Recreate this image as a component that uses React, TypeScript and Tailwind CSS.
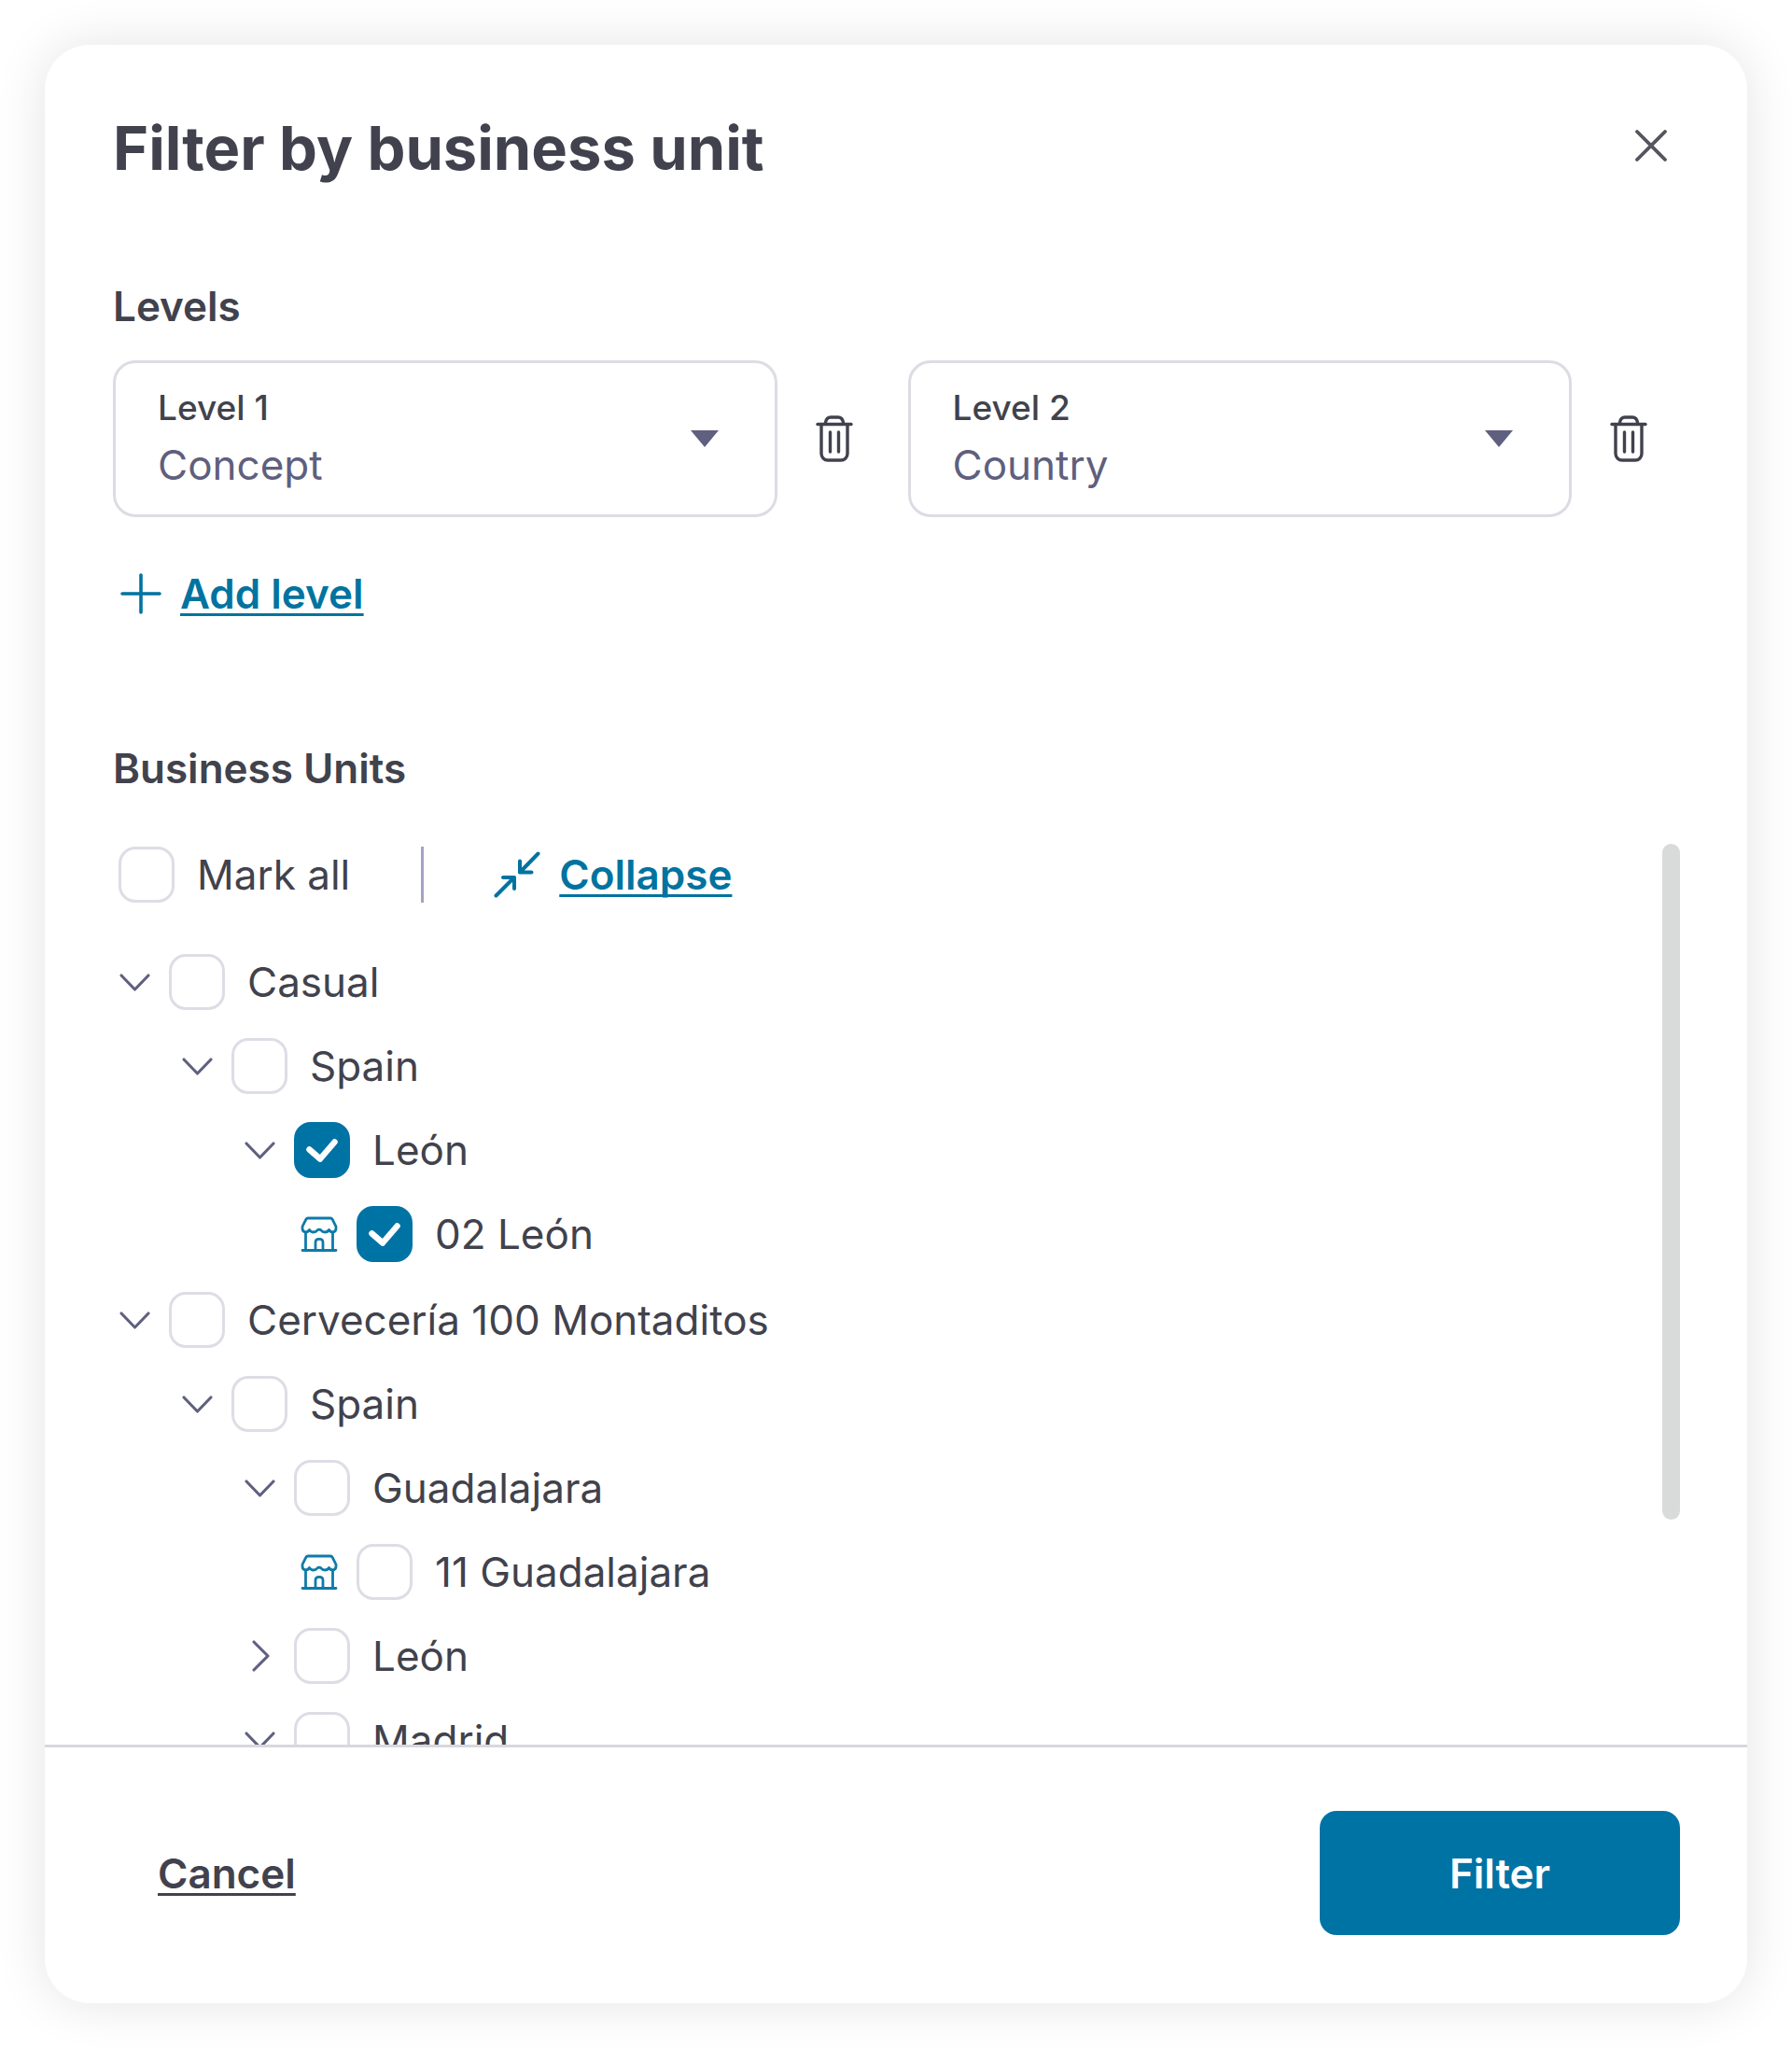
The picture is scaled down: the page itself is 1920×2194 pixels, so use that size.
import React, { useState } from 'react';
import { clsx } from 'clsx';

interface UnitNode {
    id: string;
    label: string;
    checked?: boolean;
    collapsed?: boolean;
    children?: UnitNode[];
}

const levels = [
    { id: 'level-1', label: 'Level 1', value: 'Concept' },
    { id: 'level-2', label: 'Level 2', value: 'Country' },
];

const levelOptions = ['Concept', 'Country', 'Province'];

const units: UnitNode[] = [
    {
        id: 'casual',
        label: 'Casual',
        children: [
            {
                id: 'casual-spain',
                label: 'Spain',
                children: [
                    {
                        id: 'casual-leon',
                        label: 'León',
                        checked: true,
                        children: [{ id: 'casual-leon-02', label: '02 León', checked: true }],
                    },
                ],
            },
        ],
    },
    {
        id: 'montaditos',
        label: 'Cervecería 100 Montaditos',
        children: [
            {
                id: 'montaditos-spain',
                label: 'Spain',
                children: [
                    {
                        id: 'montaditos-guadalajara',
                        label: 'Guadalajara',
                        children: [{ id: 'montaditos-guadalajara-11', label: '11 Guadalajara' }],
                    },
                    { id: 'montaditos-leon', label: 'León', collapsed: true, children: [] },
                    { id: 'montaditos-madrid', label: 'Madrid', children: [] },
                ],
            },
        ],
    },
];

const CloseIcon = () => (
    <svg width="36" height="36" viewBox="0 0 36 36" fill="none" stroke="currentColor" strokeWidth="3.8" strokeLinecap="round">
        <path d="M3 3l30 30M33 3L3 33" />
    </svg>
);

const TrashIcon = () => (
    <svg width="40" height="50" viewBox="0 0 40 50" fill="none" stroke="currentColor" strokeWidth="3.4" strokeLinecap="round" strokeLinejoin="round">
        <path d="M2 9.5h36" />
        <path d="M10.5 9V7.5Q11.5 2 16 2h8q4.5 0 5.5 5.5V9" />
        <path d="M6 10v31q0 3 2 5t5 2h14q3 0 5-2t2-5V10" />
        <path d="M15.5 18v21M24.5 18v21" />
    </svg>
);

const PlusIcon = () => (
    <svg width="44" height="44" viewBox="0 0 44 44" fill="none" stroke="currentColor" strokeWidth="3.6" strokeLinecap="round">
        <path d="M22 2v40M2 22h40" />
    </svg>
);

const CollapseIcon = () => (
    <svg width="50" height="50" viewBox="0 0 50 50" fill="none" stroke="currentColor" strokeWidth="4" strokeLinecap="round" strokeLinejoin="round">
        <path d="M47.5 2.5L28 22.5M28 10.5v12h12.5" />
        <path d="M2.5 47.5L22 28M10 28h12v12" />
    </svg>
);

const ChevronIcon = ({ collapsed }: { collapsed?: boolean }) => (
    <svg width="34" height="34" viewBox="0 0 34 34" fill="none" stroke="currentColor" strokeWidth="3.1" strokeLinecap="round" strokeLinejoin="round">
        <path d={collapsed ? 'M11 2l15 15-15 15' : 'M3 10l14.500 15L32 10'} />
    </svg>
);

const StoreIcon = () => (
    <svg width="40" height="38" viewBox="0 0 40 38" fill="none" stroke="currentColor" strokeWidth="2.8" strokeLinecap="round" strokeLinejoin="round">
        <path d="M8 2h24q1.5 0 2.2 1.3L38 11v2q0 3.5-3.3 4-2.7 0-4.2-2.5Q29 17 26.2 17T22 15q-.8-.8-2-.8t-2 .8q-1.5 2-4.2 2t-4.3-2.5Q8 17 5.3 17 2 16.5 2 13v-2l3.800-7.700Q6.5 2 8 2z" />
        <path d="M5.500 17.500V36M34.500 17.500V36M2 36.500h36" />
        <path d="M16 36V28q0-3.700 4-3.700t4 3.700v8" />
    </svg>
);

interface CheckboxProps {
    id: string;
    label: string;
    defaultChecked?: boolean;
}

const Checkbox: React.FC<CheckboxProps> = ({ id, label, defaultChecked = false }) => {
    const [checked, setChecked] = useState(defaultChecked);

    return (
        <label htmlFor={id} className="flex cursor-pointer items-center gap-6 whitespace-nowrap">
            <span className="grid">
                <input
                    id={id}
                    type="checkbox"
                    checked={checked}
                    onChange={(e) => setChecked(e.target.checked)}
                    className={clsx(
                        'col-start-1 row-start-1 size-[60px] appearance-none rounded-[18px] border-[3px]',
                        checked ? 'border-[#0073a5] bg-[#0073a5]' : 'border-[#dddde6] bg-white'
                    )}
                />
                {checked && (
                    <svg className="pointer-events-none col-start-1 row-start-1" width="60" height="60" viewBox="0 0 60 60" fill="none" stroke="white" strokeWidth="6.5" strokeLinecap="round" strokeLinejoin="round">
                        <path d="M16.500 29.500L28 39.500 43.500 21.500" />
                    </svg>
                )}
            </span>
            {label}
        </label>
    );
};

const UnitItem: React.FC<{ node: UnitNode }> = ({ node }) => (
    <li>
        <div className="flex h-[60px] items-center gap-5">
            <span className="flex w-10 justify-end">
                {node.children ? (
                    <button type="button" aria-label={`Toggle ${node.label}`} className="text-[#5f5f80]">
                        <ChevronIcon collapsed={node.collapsed} />
                    </button>
                ) : (
                    <span className="text-[#0f7aa9]">
                        <StoreIcon />
                    </span>
                )}
            </span>
            <Checkbox id={node.id} label={node.label} defaultChecked={node.checked} />
        </div>
        {node.children && node.children.length > 0 && (
            <ul className="flex flex-col gap-[30px] pt-[30px] pl-[67px]">
                {node.children.map((child) => (
                    <UnitItem key={child.id} node={child} />
                ))}
            </ul>
        )}
    </li>
);

const LevelSelect: React.FC<{ id: string; label: string; value: string }> = ({ id, label, value }) => (
    <div className="flex items-center">
        <div className="flex flex-1 items-center rounded-[24px] border-[3px] border-[#dcdce4] pt-[24px] pr-[60px] pb-[25px] pl-[45px]">
            <div className="flex flex-1 flex-col gap-[9px]">
                <label htmlFor={id} className="text-[37px] leading-[48px] font-medium text-[#41424c]">
                    {label}
                </label>
                <select id={id} defaultValue={value} className="w-full appearance-none bg-transparent text-[44px] leading-[56px] text-[#5f5f7e]">
                    {levelOptions.map((option) => (
                        <option key={option}>{option}</option>
                    ))}
                </select>
            </div>
            <svg className="pointer-events-none" width="30" height="18" viewBox="0 0 30 18" fill="#5f5f80">
                <path d="M0 0h30L15 18z" />
            </svg>
        </div>
        <button type="button" aria-label={`Remove ${label}`} className="flex w-[116px] justify-center pl-[6px] text-[#41424e]">
            <TrashIcon />
        </button>
    </div>
);

export default function App() {
    return (
        <main className="flex h-screen bg-white p-12 font-['Inter',sans-serif] text-[44px] leading-[48px] text-[#41424c]">
            <section
                role="dialog"
                aria-labelledby="dialog-title"
                className="flex flex-1 flex-col overflow-hidden rounded-[48px] bg-white shadow-[0_0_56px_rgba(0,0,0,0.11)]"
            >
                <div className="flex min-h-0 flex-1 flex-col pt-[75px] pr-[72px] pl-[73px]">
                    <header className="flex items-start justify-between pr-[13px]">
                        <h1 id="dialog-title" className="text-[65px] leading-[72px] font-bold text-[#41424e]">
                            Filter by business unit
                        </h1>
                        <button type="button" aria-label="Close" className="pt-[15px] text-[#55565e]">
                            <CloseIcon />
                        </button>
                    </header>

                    <h2 className="mt-[109px] font-semibold">Levels</h2>
                    <div className="mt-[34px] grid grid-cols-2 gap-6">
                        {levels.map((level) => (
                            <LevelSelect key={level.id} {...level} />
                        ))}
                    </div>
                    <button type="button" className="mt-[58px] flex items-center gap-5 self-start pl-[8px] font-semibold text-[#0073a0]">
                        <PlusIcon />
                        <span className="underline decoration-[3px] underline-offset-[5px]">Add level</span>
                    </button>

                    <h2 className="mt-[139px] font-semibold">Business Units</h2>
                    <div className="mt-[57px] flex min-h-0 flex-1">
                        <div className="flex-1 overflow-hidden pt-[3px]">
                            <div className="flex items-center pl-[6px]">
                                <Checkbox id="mark-all" label="Mark all" />
                                <span className="ml-[76px] h-[60px] w-[3px] bg-[#a3a3c4]" />
                                <button type="button" className="ml-[75px] flex items-center gap-5 font-semibold text-[#0073a0]">
                                    <CollapseIcon />
                                    <span className="underline decoration-[3px] underline-offset-[5px] [text-decoration-skip-ink:none]">Collapse</span>
                                </button>
                            </div>
                            <ul className="mt-[55px] flex flex-col gap-8">
                                {units.map((node) => (
                                    <UnitItem key={node.id} node={node} />
                                ))}
                            </ul>
                        </div>
                        <div className="h-3/4 w-[19px] rounded-full bg-[#d9dada]" />
                    </div>
                </div>

                <footer className="flex items-center justify-between border-t-[3px] border-[#d8d8de] pt-[68px] pr-[72px] pb-[73px] pl-[121px]">
                    <button type="button" className="font-semibold text-[#41424e] underline decoration-[3px] underline-offset-[5px]">
                        Cancel
                    </button>
                    <button type="button" className="h-[133px] w-[386px] rounded-[18px] bg-[#0073a5] font-semibold text-white">
                        Filter
                    </button>
                </footer>
            </section>
        </main>
    );
}
